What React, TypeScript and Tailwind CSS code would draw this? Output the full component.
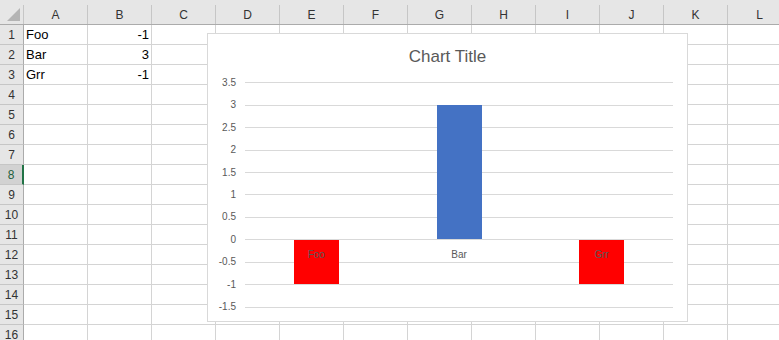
import React from 'react';

const columns = ['A', 'B', 'C', 'D', 'E', 'F', 'G', 'H', 'I', 'J', 'K', 'L'];
const rows = Array.from({ length: 16 }, (_, i) => i + 1);

const cells: Record<string, { text: string; right?: boolean }> = {
  A1: { text: 'Foo' },
  B1: { text: '-1', right: true },
  A2: { text: 'Bar' },
  B2: { text: '3', right: true },
  A3: { text: 'Grr' },
  B3: { text: '-1', right: true },
};

const series = [
  { name: 'Foo', value: -1, color: '#ff0000' },
  { name: 'Bar', value: 3, color: '#4472c4' },
  { name: 'Grr', value: -1, color: '#ff0000' },
];

const ticks = [3.5, 3, 2.5, 2, 1.5, 1, 0.5, 0, -0.5, -1, -1.5];

// plot geometry inside the svg
const plotLeft = 37;
const plotRight = 465;
const zeroY = 161.3;
const unit = 44.86;
const yOf = (v: number) => zeroY - v * unit;

function Chart() {
  const catWidth = (plotRight - plotLeft) / series.length;
  const zero = Math.round(zeroY);

  return (
    <div className="absolute left-[207px] top-[33px] w-[481px] h-[289px] border border-[#d9d9d9] bg-white flex flex-col">
      <div className="h-[45px] flex items-center justify-center text-[17px] text-[#595959]">
        Chart Title
      </div>
      <svg width={479} height={242} className="block -mt-px">
        {ticks.map((v) => (
          <g key={v}>
            <line
              x1={plotLeft}
              x2={plotRight}
              y1={Math.round(yOf(v)) + 0.5}
              y2={Math.round(yOf(v)) + 0.5}
              stroke="#d9d9d9"
              strokeWidth={1}
            />
            <text
              x={28}
              y={yOf(v)}
              textAnchor="end"
              dominantBaseline="central"
              fontSize={10}
              fill="#595959"
              fontFamily="'Liberation Sans', Arial, sans-serif"
            >
              {String(v)}
            </text>
          </g>
        ))}
        {series.map((s, i) => {
          const center = plotLeft + catWidth * i + catWidth / 2;
          const x = Math.round(center - 22.5);
          const top = s.value >= 0 ? Math.round(yOf(s.value)) : zero + 1;
          const bottom = s.value >= 0 ? zero : Math.round(yOf(s.value));
          return (
            <rect key={s.name} x={x} y={top} width={45} height={bottom - top} fill={s.color} />
          );
        })}
        {series.map((s, i) => (
          <text
            key={s.name}
            x={plotLeft + catWidth * i + catWidth / 2}
            y={176}
            textAnchor="middle"
            dominantBaseline="central"
            fontSize={10}
            fill="#595959"
            fontFamily="'Liberation Sans', Arial, sans-serif"
          >
            {s.name}
          </text>
        ))}
      </svg>
    </div>
  );
}

export default function App() {
  return (
    <div className="relative w-[779px] h-[340px] overflow-hidden bg-white font-['Liberation_Sans',Arial,sans-serif]">
      <div className="flex h-[25px] bg-[#e6e6e6] border-b border-[#ababab]">
        <div className="w-[24px] shrink-0 flex items-end justify-end">
          <div className="mt-[5px] h-[19px] w-[24px] border-r border-[#c6c6c6] flex items-end justify-end">
            <svg width={23} height={19} viewBox="0 0 23 19">
              <polygon points="20,3 20,16 7,16" fill="#b4b4b4" />
            </svg>
          </div>
        </div>
        {columns.map((c) => (
          <div
            key={c}
            className="w-[64px] shrink-0 mt-[5px] h-[19px] border-r border-[#c6c6c6] flex items-center justify-center text-[12px] text-[#333]"
          >
            {c}
          </div>
        ))}
      </div>

      {rows.map((r) => {
        const selected = r === 8;
        return (
          <div key={r} className="flex h-[20px]">
            <div
              className={
                selected
                  ? 'w-[24px] shrink-0 bg-[#d2d2d2] border-b border-[#c6c6c6] border-r-2 border-r-[#217346] flex items-center justify-center text-[12px] text-[#1e5e3c]'
                  : 'w-[24px] shrink-0 bg-[#e6e6e6] border-b border-[#c6c6c6] border-r border-r-[#ababab] flex items-center justify-center text-[12px] text-[#333]'
              }
            >
              {r}
            </div>
            {columns.map((c) => {
              const cell = cells[`${c}${r}`];
              return (
                <div
                  key={c}
                  className={
                    cell?.right
                      ? 'w-[64px] shrink-0 border-r border-b border-[#d4d4d4] flex items-center justify-end px-[2px] text-[13px] text-black'
                      : 'w-[64px] shrink-0 border-r border-b border-[#d4d4d4] flex items-center px-[2px] text-[13px] text-black'
                  }
                >
                  {cell?.text}
                </div>
              );
            })}
          </div>
        );
      })}

      <Chart />
    </div>
  );
}
